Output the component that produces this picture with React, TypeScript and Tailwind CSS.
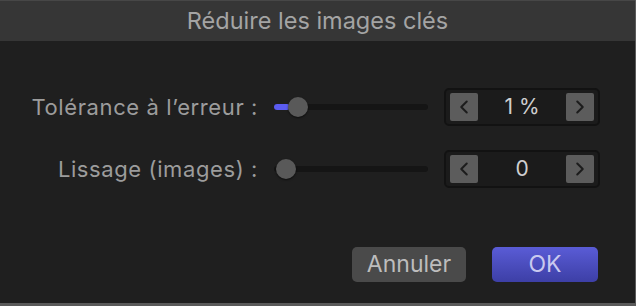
import { ChevronLeft, ChevronRight } from 'lucide-react';

function Slider({ thumb, fill }: { thumb: number; fill: number }) {
  return (
    <div className="relative h-[24px] w-[154px]">
      <div className="absolute left-0 right-0 top-[9px] h-[6px] rounded-full bg-[#151515]" />
      {fill > 0 && (
        <div className="absolute left-0 top-[9px] h-[6px] rounded-full bg-[#5b5cf0]" style={{ width: fill }} />
      )}
      <div
        className="absolute top-[2px] h-[20px] w-[20px] rounded-full bg-[#595959] shadow-[0_1px_2px_rgba(0,0,0,0.6)]"
        style={{ left: thumb }}
      />
    </div>
  );
}

function Stepper({ value }: { value: string }) {
  return (
    <div className="flex h-[38px] w-[156px] items-center justify-between rounded-[5px] border-2 border-[#121212] bg-[#1b1b1b] px-[4px]">
      <button className="flex h-[28px] w-[28px] items-center justify-center rounded-[2px] bg-[#5c5c5c] text-[#1c1c1c]">
        <ChevronLeft size={22} strokeWidth={2.2} />
      </button>
      <span className="text-[21px] text-[#cfcfcf]">{value}</span>
      <button className="flex h-[28px] w-[28px] items-center justify-center rounded-[2px] bg-[#5c5c5c] text-[#1c1c1c]">
        <ChevronRight size={22} strokeWidth={2.2} />
      </button>
    </div>
  );
}

export default function App() {
  return (
    <div
      className="flex h-[306px] w-[636px] flex-col overflow-hidden border-r border-b-[3px] border-[#5a5a5a] bg-[#1f1f1f]"
      style={{ fontFamily: 'Inter, "Noto Sans", sans-serif' }}
    >
      {/* Title bar */}
      <div className="flex h-[41px] items-center justify-center border-t border-[#474747] bg-[#363636]">
        <h1 className="text-[23.5px] text-[#a4a4a4]">Réduire les images clés</h1>
      </div>

      {/* Rows */}
      <div className="flex flex-col gap-[24px] pt-[47px]">
        <div className="flex items-center">
          <span className="w-[259px] pr-[1px] text-right text-[22px] tracking-[0.6px] text-[#9c9c9c]">
            Tolérance à l’erreur :
          </span>
          <div className="ml-[15px]">
            <Slider thumb={14} fill={16} />
          </div>
          <div className="ml-[16px]">
            <Stepper value="1 %" />
          </div>
        </div>
        <div className="flex items-center">
          <span className="w-[259px] pr-[1px] text-right text-[22px] tracking-[0.6px] text-[#9c9c9c]">
            Lissage (images) :
          </span>
          <div className="ml-[15px]">
            <Slider thumb={2} fill={0} />
          </div>
          <div className="ml-[16px]">
            <Stepper value="0" />
          </div>
        </div>
      </div>

      {/* Buttons */}
      <div className="mt-[59px] flex justify-end gap-[26px] pr-[37px]">
        <button className="h-[35px] w-[114px] rounded-[5px] bg-[#4a4a4a] text-[23px] text-[#bdbdbd]">Annuler</button>
        <button className="h-[35px] w-[106px] rounded-[5px] bg-gradient-to-b from-[#5a5cd6] to-[#3d3fa6] text-[23px] text-[#c9c9ef]">
          OK
        </button>
      </div>
    </div>
  );
}
